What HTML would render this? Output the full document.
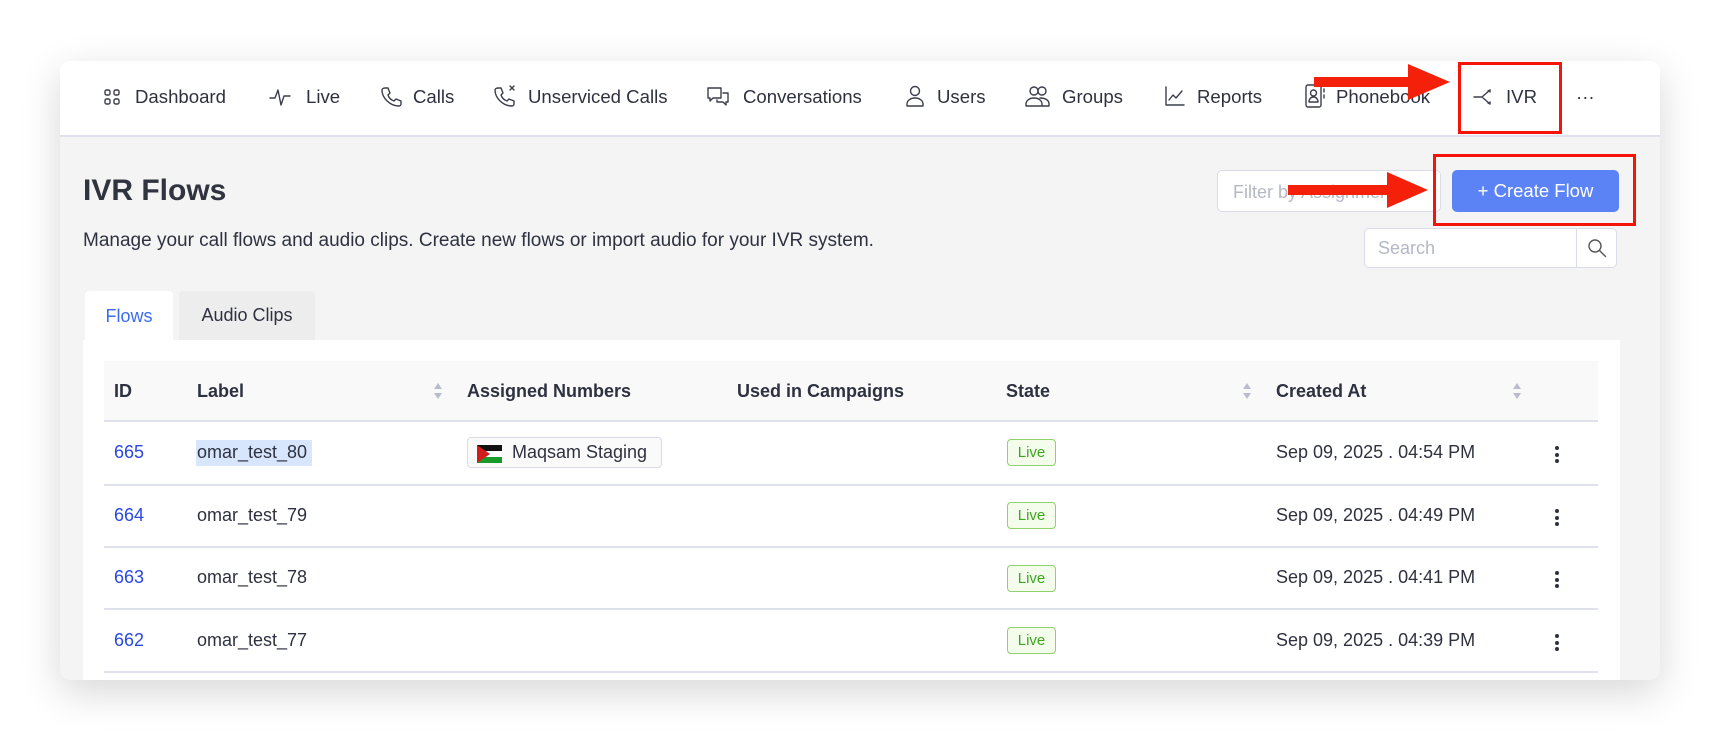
<!DOCTYPE html>
<html><head><meta charset="utf-8"><style>
*{box-sizing:border-box;margin:0;padding:0}
body{width:1720px;height:740px;background:#fff;font-family:"Liberation Sans",sans-serif;color:#2b2f3a;position:relative;overflow:hidden}
.a{position:absolute;white-space:nowrap}
.card{position:absolute;left:60px;top:61px;width:1600px;height:619px;background:#f4f4f4;border-radius:10px;box-shadow:0 12px 40px rgba(0,0,0,.16);overflow:hidden}
.nav{position:absolute;left:0;top:0;width:1600px;height:76px;background:#fff;border-bottom:2px solid #dfe2ec}
.nt{font-size:18.6px;color:#2e3240;top:86px}
svg.i{position:absolute;fill:none;stroke:#3a3e4a;stroke-width:1.4;stroke-linecap:round;stroke-linejoin:round}
.th{font-size:18px;font-weight:bold;color:#2e3240;top:381px}
.td{font-size:18px;color:#2e3240}
.id{color:#2848e0}
.hl{position:absolute;left:104px;width:1494px;height:2px;background:#dfe2ec}
.live{position:absolute;left:1007px;width:49px;height:27px;border:1px solid #8fd16a;background:#f4fcec;border-radius:4px;color:#3ea61f;font-size:15px;text-align:center;line-height:25px}
.dots{position:absolute;left:1555px;width:4px}
.dots i{display:block;width:4px;height:4px;background:#2e3240;border-radius:50%;margin-bottom:2.5px}
.sort{position:absolute;width:10px;height:18px}
</style></head><body>
<div class="card">
<div class="nav"></div>
</div>
<svg class="i" style="left:104px;top:89px" width="16" height="16" viewBox="0 0 16 16"><rect x="1" y="1" width="5" height="5" rx="1.5"/><rect x="10" y="1" width="5" height="5" rx="1.5"/><rect x="1" y="10" width="5" height="5" rx="1.5"/><rect x="10" y="10" width="5" height="5" rx="1.5"/></svg>
<div class="a nt" style="left:135px">Dashboard</div>
<svg class="i" style="left:269px;top:86px" width="26" height="22" viewBox="0 0 26 22"><path d="M1 12h5l3-8 3 15 3-9h6"/></svg>
<div class="a nt" style="left:306px">Live</div>
<svg class="i" style="left:380px;top:86px" width="22" height="22" viewBox="0 0 22 22"><path d="M5 2l3 0 2 5-2 2c1 3 3 5 6 6l2-2 5 2v3c0 1-1 2-2 2C10 20 2 12 2 4c0-1 1-2 3-2z"/></svg>
<div class="a nt" style="left:413px">Calls</div>
<svg class="i" style="left:493px;top:84px" width="24" height="24" viewBox="0 0 24 24"><path d="M5 4l3 0 2 5-2 2c1 3 3 5 6 6l2-2 5 2v3c0 1-1 2-2 2C10 22 2 14 2 6c0-1 1-2 3-2z"/><path d="M17 2l4 4M21 2l-4 4"/></svg>
<div class="a nt" style="left:528px">Unserviced Calls</div>
<svg class="i" style="left:706px;top:86px" width="24" height="22" viewBox="0 0 24 22"><path d="M2 2h13v10H7l-3 3v-3H2z"/><path d="M17 7h5v9h-2v3l-3-3h-6v-2"/></svg>
<div class="a nt" style="left:743px">Conversations</div>
<svg class="i" style="left:906px;top:85px" width="18" height="22" viewBox="0 0 18 22"><circle cx="9" cy="6" r="4.5"/><path d="M1 21v-2c0-3 3-6 8-6s8 3 8 6v2z"/></svg>
<div class="a nt" style="left:937px">Users</div>
<svg class="i" style="left:1025px;top:85px" width="26" height="22" viewBox="0 0 26 22"><circle cx="9" cy="6" r="4"/><circle cx="17" cy="6" r="4"/><path d="M1 21v-2c0-3 3-6 8-6s8 3 8 6v2zM15 13c5 0 9 2 9 6v2h-7"/></svg>
<div class="a nt" style="left:1062px">Groups</div>
<svg class="i" style="left:1165px;top:86px" width="20" height="20" viewBox="0 0 20 20"><path d="M1 1v18h18"/><path d="M4 14l4-5 3 3 6-7"/></svg>
<div class="a nt" style="left:1197px">Reports</div>
<svg class="i" style="left:1305px;top:84px" width="20" height="24" viewBox="0 0 20 24"><rect x="1" y="1" width="15" height="22" rx="2"/><circle cx="8.5" cy="9" r="3"/><path d="M4 18c0-3 2-5 4.5-5s4.5 2 4.5 5z"/><path d="M19 5v3M19 11v3"/></svg>
<div class="a nt" style="left:1336px">Phonebook</div>
<svg class="i" style="left:1473px;top:87px" width="24" height="20" viewBox="0 0 24 20"><path d="M1 10h8M9 10l8-7M9 10l8 7M17 3l-2 1M17 3l0 2M17 17l-2-1M17 17l0-2"/></svg>
<div class="a nt" style="left:1506px">IVR</div>
<div class="a nt" style="left:1576px;top:86px">···</div>
<div class="a" style="left:1458px;top:62px;width:104px;height:72px;border:3px solid #f4140a"></div>
<svg class="a" style="left:1314px;top:64px" width="136" height="36" viewBox="0 0 136 36"><rect x="0" y="13" width="95" height="10" fill="#f4200a"/><polygon points="94,0 136,18 94,36" fill="#f4200a"/></svg>
<div class="a" style="left:83px;top:174px;font-size:30px;font-weight:bold;color:#30343f">IVR Flows</div>
<div class="a" style="left:83px;top:230px;font-size:19px;color:#2e3240">Manage your call flows and audio clips. Create new flows or import audio for your IVR system.</div>
<div class="a" style="left:1217px;top:170px;width:224px;height:42px;border:1px solid #d9dce6;border-radius:5px;background:#fff;font-size:18px;color:#b4b8c4;padding:11px 15px">Filter by Assignment</div>
<div class="a" style="left:1452px;top:170px;width:167px;height:42px;border-radius:5px;background:#5b83f6;color:#fff;font-size:18.5px;line-height:42px;text-align:center">+ Create Flow</div>
<div class="a" style="left:1433px;top:154px;width:203px;height:72px;border:3px solid #f4140a"></div>
<svg class="a" style="left:1288px;top:172px" width="140" height="36" viewBox="0 0 140 36"><rect x="0" y="13" width="100" height="10" fill="#f4200a"/><polygon points="99,0 140,18 99,36" fill="#f4200a"/></svg>
<div class="a" style="left:1364px;top:228px;width:253px;height:40px;border:1px solid #d9dce6;border-radius:5px;background:#fff"></div>
<div class="a" style="left:1576px;top:229px;width:1px;height:38px;background:#d9dce6"></div>
<div class="a" style="left:1378px;top:238px;font-size:18px;color:#b4b8c4">Search</div>
<svg class="i" style="left:1587px;top:238px;stroke:#555" width="20" height="20" viewBox="0 0 20 20"><circle cx="8" cy="8" r="6"/><path d="M12.5 12.5l6 6"/></svg>
<div class="a" style="left:85px;top:291px;width:88px;height:50px;background:#fff;border-radius:4px 4px 0 0;color:#3a6cf4;font-size:18px;text-align:center;line-height:50px">Flows</div>
<div class="a" style="left:179px;top:291px;width:136px;height:49px;background:#ededed;border-radius:4px 4px 0 0;color:#2e3240;font-size:18px;text-align:center;line-height:49px">Audio Clips</div>
<div class="a" style="left:83px;top:340px;width:1537px;height:340px;background:#fff"></div>
<div class="a" style="left:104px;top:361px;width:1494px;height:60px;background:#f9f9fa"></div>
<div class="a th" style="left:114px">ID</div>
<div class="a th" style="left:197px">Label</div>
<div class="a th" style="left:467px">Assigned Numbers</div>
<div class="a th" style="left:737px">Used in Campaigns</div>
<div class="a th" style="left:1006px">State</div>
<div class="a th" style="left:1276px">Created At</div>
<svg class="sort" style="left:433px;top:382px" viewBox="0 0 10 18"><path d="M5 1l4 6H1z" fill="#b8bccb"/><path d="M5 17l4-6H1z" fill="#b8bccb"/></svg>
<svg class="sort" style="left:1242px;top:382px" viewBox="0 0 10 18"><path d="M5 1l4 6H1z" fill="#b8bccb"/><path d="M5 17l4-6H1z" fill="#b8bccb"/></svg>
<svg class="sort" style="left:1512px;top:382px" viewBox="0 0 10 18"><path d="M5 1l4 6H1z" fill="#b8bccb"/><path d="M5 17l4-6H1z" fill="#b8bccb"/></svg>
<div class="hl" style="top:420px"></div>
<div class="hl" style="top:484px"></div>
<div class="hl" style="top:546px"></div>
<div class="hl" style="top:608px"></div>
<div class="hl" style="top:671px"></div>
<div class="a td id" style="left:114px;top:442px">665</div>
<div class="a" style="left:196px;top:440px;width:116px;height:26px;background:#d8e6fd"></div>
<div class="a td" style="left:197px;top:442px">omar_test_80</div>
<div class="a" style="left:467px;top:437px;width:195px;height:31px;border:1px solid #d9dce6;border-radius:4px;background:#fafafb"></div>
<svg class="a" style="left:477px;top:445px" width="25" height="18" viewBox="0 0 25 18"><rect width="25" height="6" fill="#111"/><rect y="6" width="25" height="6" fill="#fff"/><rect y="12" width="25" height="6" fill="#1a9a2a"/><polygon points="0,0 13,9 0,18" fill="#d21c1c"/></svg>
<div class="a td" style="left:512px;top:442px">Maqsam Staging</div>
<div class="live" style="top:439px">Live</div>
<div class="a td" style="left:1276px;top:442px">Sep 09, 2025 . 04:54 PM</div>
<div class="dots" style="top:446px"><i></i><i></i><i></i></div>
<div class="a td id" style="left:114px;top:505px">664</div>
<div class="a td" style="left:197px;top:505px">omar_test_79</div>
<div class="live" style="top:502px">Live</div>
<div class="a td" style="left:1276px;top:505px">Sep 09, 2025 . 04:49 PM</div>
<div class="dots" style="top:509px"><i></i><i></i><i></i></div>
<div class="a td id" style="left:114px;top:567px">663</div>
<div class="a td" style="left:197px;top:567px">omar_test_78</div>
<div class="live" style="top:565px">Live</div>
<div class="a td" style="left:1276px;top:567px">Sep 09, 2025 . 04:41 PM</div>
<div class="dots" style="top:571px"><i></i><i></i><i></i></div>
<div class="a td id" style="left:114px;top:630px">662</div>
<div class="a td" style="left:197px;top:630px">omar_test_77</div>
<div class="live" style="top:627px">Live</div>
<div class="a td" style="left:1276px;top:630px">Sep 09, 2025 . 04:39 PM</div>
<div class="dots" style="top:634px"><i></i><i></i><i></i></div>
</body></html>
